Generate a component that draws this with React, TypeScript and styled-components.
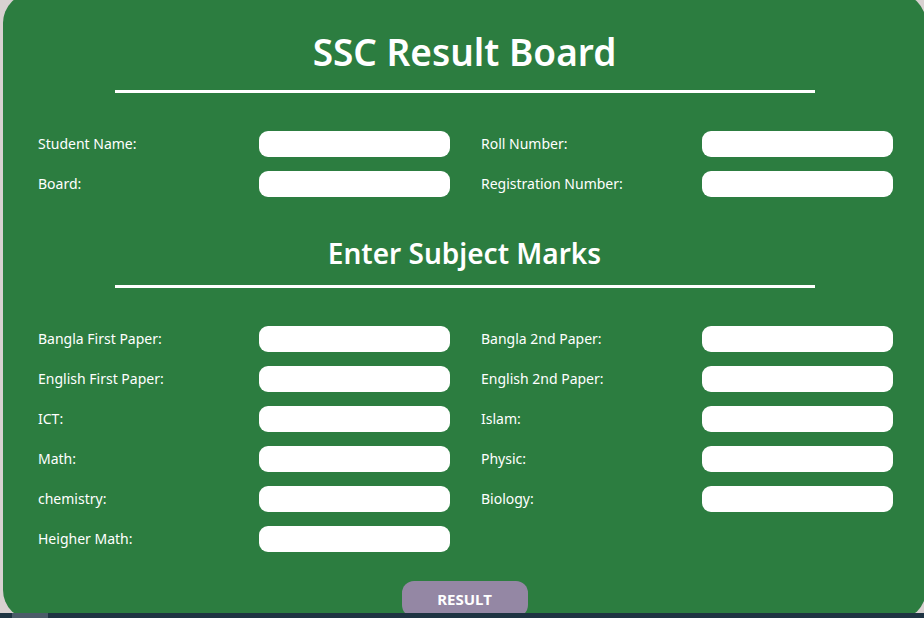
import { createGlobalStyle } from "styled-components";
import styled from "styled-components";

const GlobalStyle = createGlobalStyle`
  body {
    margin: 0;
    background: #d8d1d1;
    font-family: "Noto Sans", "Open Sans", sans-serif;
    overflow: hidden;
  }
`;

const Page = styled.div`
  height: 618px;
  overflow: hidden;
  padding-left: 3px;
  position: relative;
`;

const Card = styled.form`
  width: 923px;
  height: 627px;
  margin-top: -7px;
  box-sizing: border-box;
  background: #2c7d40;
  border-radius: 30px;
  padding-top: 35px;
  display: flex;
  flex-direction: column;
  align-items: center;
  color: #fff;
`;

const Title = styled.h1`
  margin: 0;
  font-size: 37px;
  font-weight: 600;
  line-height: 48px;
`;

const Subtitle = styled.h2`
  margin: 38px 0 0;
  font-size: 28px;
  font-weight: 600;
  line-height: 36px;
`;

const Divider = styled.hr`
  width: 700px;
  height: 3px;
  border: none;
  background: #fff;
  margin: 14px 0 38px;
`;

const Grid = styled.div`
  display: grid;
  grid-template-columns: repeat(4, 221.5px);
  row-gap: 14px;
  align-self: flex-start;
  margin-left: 34px;
`;

const Label = styled.label`
  font-size: 14px;
  display: flex;
  align-items: center;
  height: 26px;
  padding-left: 1px;
  padding-bottom: 2px;
  box-sizing: border-box;
`;

const Input = styled.input`
  width: 191px;
  height: 26px;
  box-sizing: border-box;
  border: none;
  border-radius: 9px;
  background: #fff;
  outline: none;
`;

const Button = styled.button`
  margin-top: 29px;
  width: 126px;
  height: 36px;
  border: none;
  border-radius: 12px;
  background: #9487a4;
  color: #fff;
  font-family: inherit;
  font-size: 15px;
  font-weight: 700;
`;

const Scrollbar = styled.div`
  position: absolute;
  left: 0;
  right: 0;
  bottom: 0;
  height: 5px;
  background: #1e3442;
`;

const Thumb = styled.div`
  margin-left: 12px;
  width: 36px;
  height: 100%;
  background: #4b5c69;
`;

const info = [
  ["Student Name:", "Roll Number:"],
  ["Board:", "Registration Number:"],
];

const subjects = [
  ["Bangla First Paper:", "Bangla 2nd Paper:"],
  ["English First Paper:", "English 2nd Paper:"],
  ["ICT:", "Islam:"],
  ["Math:", "Physic:"],
  ["chemistry:", "Biology:"],
  ["Heigher Math:", ""],
];

const Field = ({ label }: { label: string }) =>
  label ? (
    <>
      <Label>{label}</Label>
      <Input type="text" />
    </>
  ) : null;

const App = () => {
  return (
    <Page>
      <GlobalStyle />
      <Card onSubmit={(e) => e.preventDefault()}>
        <Title>SSC Result Board</Title>
        <Divider />
        <Grid>
          {info.map((row) => row.map((l) => <Field key={l} label={l} />))}
        </Grid>
        <Subtitle>Enter Subject Marks</Subtitle>
        <Divider />
        <Grid>
          {subjects.map((row, i) =>
            row.map((l, j) => <Field key={`${i}-${j}`} label={l} />)
          )}
        </Grid>
        <Button type="submit">RESULT</Button>
      </Card>
      <Scrollbar>
        <Thumb />
      </Scrollbar>
    </Page>
  );
};

export default App;
